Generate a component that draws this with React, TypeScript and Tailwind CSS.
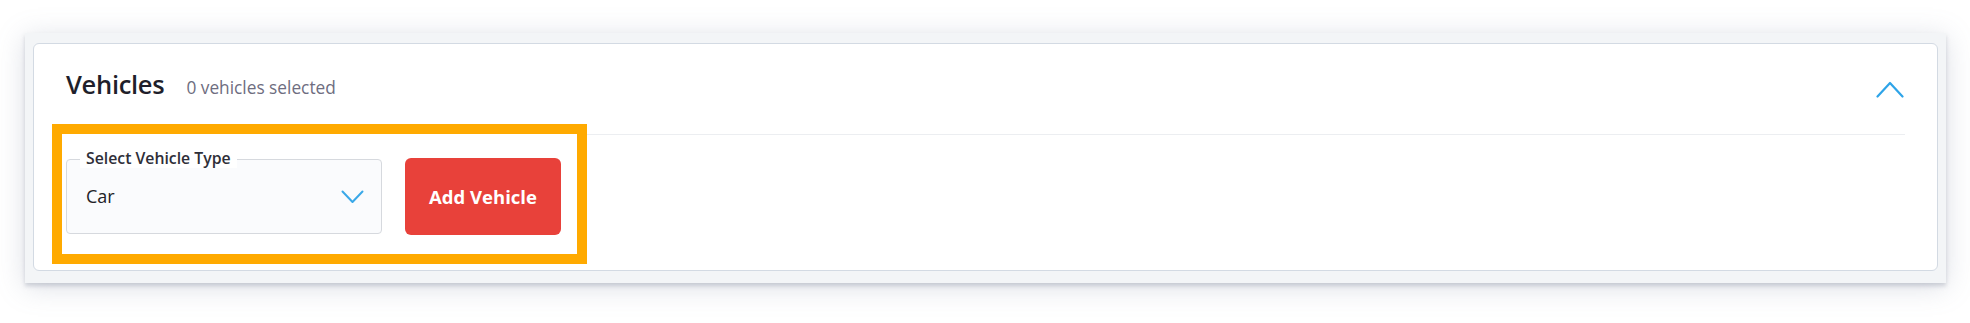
import React from "react";

export default function App() {
  return (
    <div className="w-[1970px] h-[323px] bg-white pt-[33px] pl-[25px]" style={{ fontFamily: "'Open Sans', Lato, sans-serif" }}>
      <div className="w-[1921px] h-[250px] bg-[#f3f5f7] pt-[10px] px-[8px] pb-[12px] shadow-[0_3px_4px_rgba(110,120,140,0.28),0_4px_26px_rgba(130,140,165,0.28)]">
        <div className="h-full rounded-[6px] border border-[#d3dae3] bg-white px-[32px]">
          <div className="flex h-[91px] items-center justify-between border-b border-[#eceef1]">
            <div className="flex items-baseline gap-[22px] pb-[10px]">
              <span className="text-[25.5px] font-semibold tracking-[-0.3px] text-[#1f1f2b]">Vehicles</span>
              <span className="text-[17.3px] text-[#6e6d80]">0 vehicles selected</span>
            </div>
            <svg width="28" height="18" viewBox="0 0 28 18" fill="none" className="mr-[1px]">
              <path d="M1.5 16.5 L14 3 L26.5 16.5" stroke="#2ea4e8" strokeWidth="2.2" strokeLinecap="round" strokeLinejoin="round" />
            </svg>
          </div>
          <div className="relative z-10 -mt-[11px] -ml-[14px] flex h-[140px] w-[535px] items-start border-[10px] border-[#ffaa00] bg-white pl-[4px] pt-[25px]">
            <div className="relative flex h-[75px] w-[316px] items-center justify-between rounded-[4px] border border-[#d6d9de] bg-[#fafbfd] pl-[19px] pr-[17px]">
              <span className="absolute -top-[12px] left-[13px] bg-white px-[6px] text-[15.8px] font-semibold leading-[20px] text-[#2e2e38]">
                Select Vehicle Type
              </span>
              <span className="text-[18px] text-[#222228]">Car</span>
              <svg width="23" height="14" viewBox="0 0 23 14" fill="none">
                <path d="M1.5 1.5 L11.5 12 L21.5 1.5" stroke="#3aa8e8" strokeWidth="2" strokeLinecap="round" strokeLinejoin="round" />
              </svg>
            </div>
            <button className="ml-[23px] -mt-[1px] flex h-[77px] w-[156px] items-center justify-center rounded-[6px] bg-[#e8413a] text-[18.5px] font-bold text-white">
              Add Vehicle
            </button>
          </div>
        </div>
      </div>
    </div>
  );
}
